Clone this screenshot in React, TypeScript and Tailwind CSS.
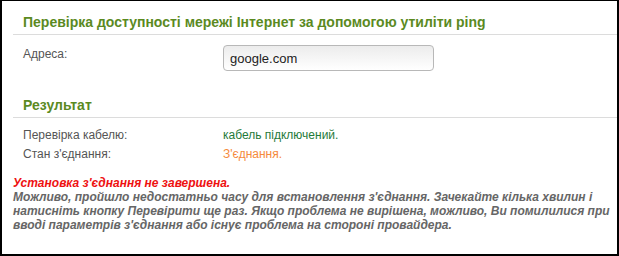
export default function App() {
    return (
        <div className="h-[256px] w-[619px] bg-white font-['Liberation_Sans',Arial,sans-serif]">
            <div className="flex h-full flex-col border-t border-r-2 border-b-2 border-l-2 border-black pl-[11px]">
                <div className="mt-[13px] border-b border-[#dcdcdc] pb-[4px] pl-[10px] text-[14px] font-bold leading-[16px] text-[#5b8a1f]">
                    Перевірка доступності мережі Інтернет за допомогою утиліти ping
                </div>
                <div className="mt-[10px] flex pl-[10px]">
                    <div className="w-[200px] pt-[2px] text-[12px] leading-[14px] text-[#555]">Адреса:</div>
                    <input
                        readOnly
                        value="google.com"
                        className="h-[26px] w-[211px] rounded-[4px] border border-[#b8b8b8] bg-gradient-to-b from-[#ececec] to-white px-[6px] text-[13px] text-[#222] outline-none"
                    />
                </div>
                <div className="mt-[26px] border-b border-[#dcdcdc] pb-[4px] pl-[10px] text-[14px] font-bold leading-[16px] text-[#5b8a1f]">
                    Результат
                </div>
                <div className="mt-[10px] flex flex-col gap-[5px] pl-[10px] text-[12px] leading-[14px]">
                    <div className="flex">
                        <div className="w-[200px] text-[#555]">Перевірка кабелю:</div>
                        <div className="text-[#1f7a3a]">кабель підключений.</div>
                    </div>
                    <div className="flex">
                        <div className="w-[200px] text-[#555]">Стан з'єднання:</div>
                        <div className="text-[#f58a3c]">З'єднання.</div>
                    </div>
                </div>
                <div className="mt-[15px] text-[12px] font-bold italic leading-[14px]">
                    <div className="text-[#ee1111]">Установка з'єднання не завершена.</div>
                    <div className="text-[#666]">
                        Можливо, пройшло недостатньо часу для встановлення з'єднання. Зачекайте кілька хвилин і натисніть кнопку Перевірити ще раз. Якщо проблема не вирішена, можливо, Ви помилилися при вводі параметрів з'єднання або існує проблема на стороні провайдера.
                    </div>
                </div>
            </div>
        </div>
    );
}
